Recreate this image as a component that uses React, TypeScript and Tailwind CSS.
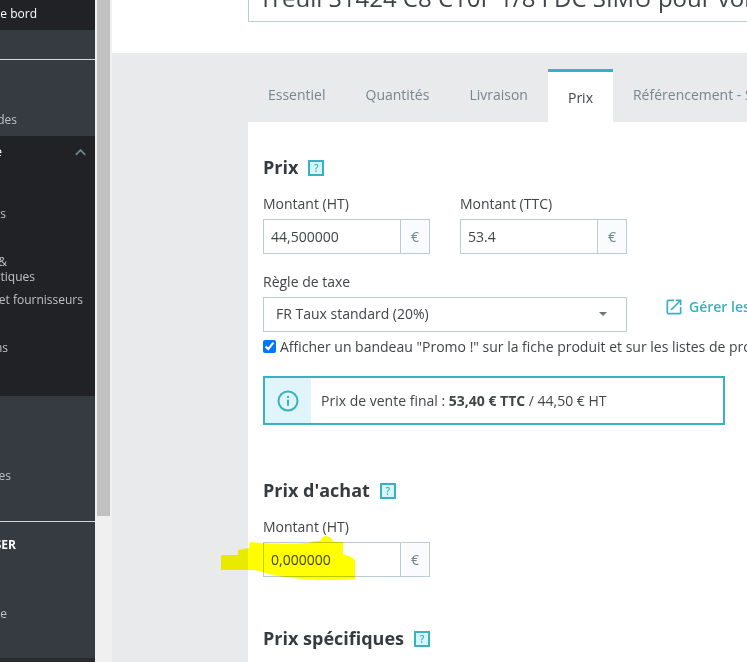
import { useState } from 'react';

interface NavEntry {
  label: string;
  className: string;
}

const tabs = ['Essentiel', 'Quantités', 'Livraison', 'Prix', 'Référencement - SEO'];

const NavLink: React.FC<NavEntry> = ({ label, className }) => (
  <a href="#" className={`flex justify-end whitespace-nowrap ${className}`}>
    {label}
  </a>
);

const Sidebar: React.FC = () => (
  <nav className="w-[95px] shrink-0 overflow-hidden bg-[#363a41] text-xs leading-4 text-[#bec1c4]">
    <div className="h-[30px] bg-[#202226] pt-[6px]">
      <NavLink label="e bord" className="w-[37px] text-white" />
    </div>
    <div className="h-[106px] pt-[29px]">
      <div className="border-t border-[#d3d8dc]" />
      <NavLink label="des" className="mt-[52px] w-[17px]" />
    </div>
    <div className="h-[260px] bg-[#202226] pt-2">
      <div className="flex items-center justify-between pr-2">
        <NavLink label="e" className="w-[2px] text-white" />
        <svg width="13" height="13" viewBox="0 0 13 13" fill="none" stroke="#6c868e" strokeWidth="1.8">
          <path d="M1.8 8.8 6.5 4.1l4.7 4.7" />
        </svg>
      </div>
      <NavLink label="s" className="mt-[46px] w-[6px]" />
      <div className="mt-8 leading-[15px]">
        <NavLink label="&" className="w-[7px]" />
        <NavLink label="tiques" className="w-[35px]" />
      </div>
      <NavLink label="et fournisseurs" className="mt-2 w-[83px]" />
      <NavLink label="ns" className="mt-8 w-2" />
    </div>
    <div className="h-[126px] border-b border-[#d3d8dc] pt-[72px]">
      <NavLink label="es" className="w-[11px]" />
    </div>
    <div className="h-[136px] pt-[15px]">
      <span className="flex w-4 justify-end font-bold text-white">SER</span>
      <NavLink label="e" className="mt-[53px] w-[7px]" />
    </div>
    <div className="h-1 bg-[#282b30]" />
  </nav>
);

const HelpButton: React.FC = () => (
  <button
    type="button"
    aria-label="?"
    className="flex size-4 items-center justify-center border-2 border-[#3ab1c2] bg-[#d5f7fa] text-[10px] leading-3 font-semibold text-[#4aa9ba]"
  >
    ?
  </button>
);

const SectionTitle: React.FC<{ children: React.ReactNode }> = ({ children }) => (
  <div className="mb-[15px] flex items-center gap-[10px]">
    <h2 className="text-lg leading-[23px] font-bold text-[#363a41]">{children}</h2>
    <HelpButton />
  </div>
);

interface AmountFieldProps {
  id: string;
  label: string;
  value: string;
}

const AmountField: React.FC<AmountFieldProps> = ({ id, label, value }) => {
  const [amount, setAmount] = useState(value);
  return (
    <div className="w-[167px] shrink-0">
      <label htmlFor={id} className="mb-[5px] block leading-5">
        {label}
      </label>
      <div className="flex h-[35px] border border-[#bbcdd2]">
        <input
          id={id}
          value={amount}
          onChange={(e) => setAmount(e.target.value)}
          className="min-w-0 flex-1 bg-white px-[7px] outline-none"
        />
        <span className="flex w-[29px] items-center justify-center border-l border-[#bbcdd2] bg-[#fafbfc] text-[#6c868e]">
          €
        </span>
      </div>
    </div>
  );
};

const App: React.FC = () => {
  const [active, setActive] = useState('Prix');
  return (
    <div className="flex h-screen overflow-hidden bg-[#e8eaec] font-['Open_Sans',sans-serif] text-sm text-[#414448]">
      <Sidebar />
      <div className="w-[17px] shrink-0 bg-[#f0f0f0] px-[2px]">
        <div className="h-[516px] bg-[#c1c1c1]" />
      </div>
      <main className="flex min-w-0 flex-1 flex-col overflow-hidden">
        <header className="flex h-[53px] shrink-0 items-end bg-white pb-[31px] pl-[136px]">
          <input
            aria-label="Treuil S1424"
            defaultValue="Treuil S1424 C8 C10F 1/8 FDC SIMU pour volet roulant"
            className="-mr-5 h-[50px] min-w-0 flex-1 border border-[#bbcdd2] px-[10px] text-2xl outline-none"
          />
        </header>
        <div className="mt-4 flex flex-1 flex-col pl-[136px]">
          <div role="tablist" className="flex h-[53px] shrink-0">
            {tabs.map((tab) => (
              <button
                key={tab}
                type="button"
                role="tab"
                aria-selected={tab === active}
                onClick={() => setActive(tab)}
                className={
                  tab === active
                    ? 'shrink-0 border-t-3 border-[#3ab1c2] bg-white px-5 pt-[2px] whitespace-nowrap'
                    : 'shrink-0 px-5 pb-[2px] whitespace-nowrap text-[#76878d]'
                }
              >
                {tab}
              </button>
            ))}
          </div>
          <div className="flex-1 bg-white pt-[34px] pl-[15px]">
            <section>
              <SectionTitle>Prix</SectionTitle>
              <div className="flex gap-[30px]">
                <AmountField id="price-ht" label="Montant (HT)" value="44,500000" />
                <AmountField id="price-ttc" label="Montant (TTC)" value="53.4" />
              </div>
              <label htmlFor="tax-rule" className="mt-[18px] mb-[5px] block leading-5">
                Règle de taxe
              </label>
              <div className="flex items-center">
                <div className="relative w-[364px] shrink-0">
                  <select
                    id="tax-rule"
                    className="block h-[35px] w-full appearance-none border border-[#bbcdd2] bg-white px-3 pb-[2px] outline-none"
                  >
                    <option>FR Taux standard (20%)</option>
                  </select>
                  <svg
                    className="pointer-events-none absolute top-[15px] right-5"
                    width="8"
                    height="4"
                    viewBox="0 0 8 4"
                    fill="#6c7579"
                  >
                    <path d="M0 0h8L4 4z" />
                  </svg>
                </div>
                <a
                  href="#"
                  className="-mt-4 ml-[37px] flex shrink-0 items-center gap-[5px] font-semibold whitespace-nowrap text-[#3ab1c2]"
                >
                  <svg width="20" height="20" viewBox="0 0 24 24" fill="currentColor">
                    <path d="M19 19H5V5h7V3H5a2 2 0 0 0-2 2v14a2 2 0 0 0 2 2h14c1.100 0 2-.9 2-2v-7h-2v7zM14 3v2h3.590l-9.830 9.830 1.410 1.410L19 6.410V10h2V3h-7z" />
                  </svg>
                  Gérer les règles de taxe
                </a>
              </div>
              <div className="mt-[5px] flex items-start gap-1">
                <input id="on-sale" type="checkbox" defaultChecked className="mt-[3px] size-[13px] shrink-0" />
                <label htmlFor="on-sale" className="leading-5 whitespace-nowrap">
                  Afficher un bandeau "Promo !" sur la fiche produit et sur les listes de produits.
                </label>
              </div>
              <div className="mt-[19px] mr-[22px] flex h-[49px] max-w-[462px] border-2 border-[#3ab1c2]">
                <div className="flex w-[46px] items-center justify-center bg-[#dff5f9] text-[#3ab1c2]">
                  <svg width="22" height="22" viewBox="0 0 22 22" fill="none" stroke="currentColor" strokeWidth="2">
                    <circle cx="11" cy="11" r="9.500" />
                    <path d="M11 9.800v6M11 6v2" />
                  </svg>
                </div>
                <p className="self-center pl-[10px]">
                  Prix de vente final : <strong className="font-bold">53,40 € TTC</strong> / 44,50 € HT
                </p>
              </div>
            </section>
            <section className="mt-[54px]">
              <SectionTitle>Prix d'achat</SectionTitle>
              <div className="relative">
                <AmountField id="wholesale-price" label="Montant (HT)" value="0,000000" />
                <svg
                  className="pointer-events-none absolute top-[18px] -left-[42px] mix-blend-multiply"
                  width="136"
                  height="46"
                  viewBox="0 0 136 46"
                  fill="#ffff00"
                >
                  <path d="M0 20h17v-5l11-2 1-6q28 3 59 1C92 6 99 6 99 6c1-3 3-5 6-5s6 2 8 6h9v12q8 2 12 6v19q-14 1-30 1-32-1-46-4-11-2-24-6H0z" />
                </svg>
              </div>
            </section>
            <section className="mt-[50px]">
              <SectionTitle>Prix spécifiques</SectionTitle>
            </section>
          </div>
        </div>
      </main>
    </div>
  );
};

export default App;
